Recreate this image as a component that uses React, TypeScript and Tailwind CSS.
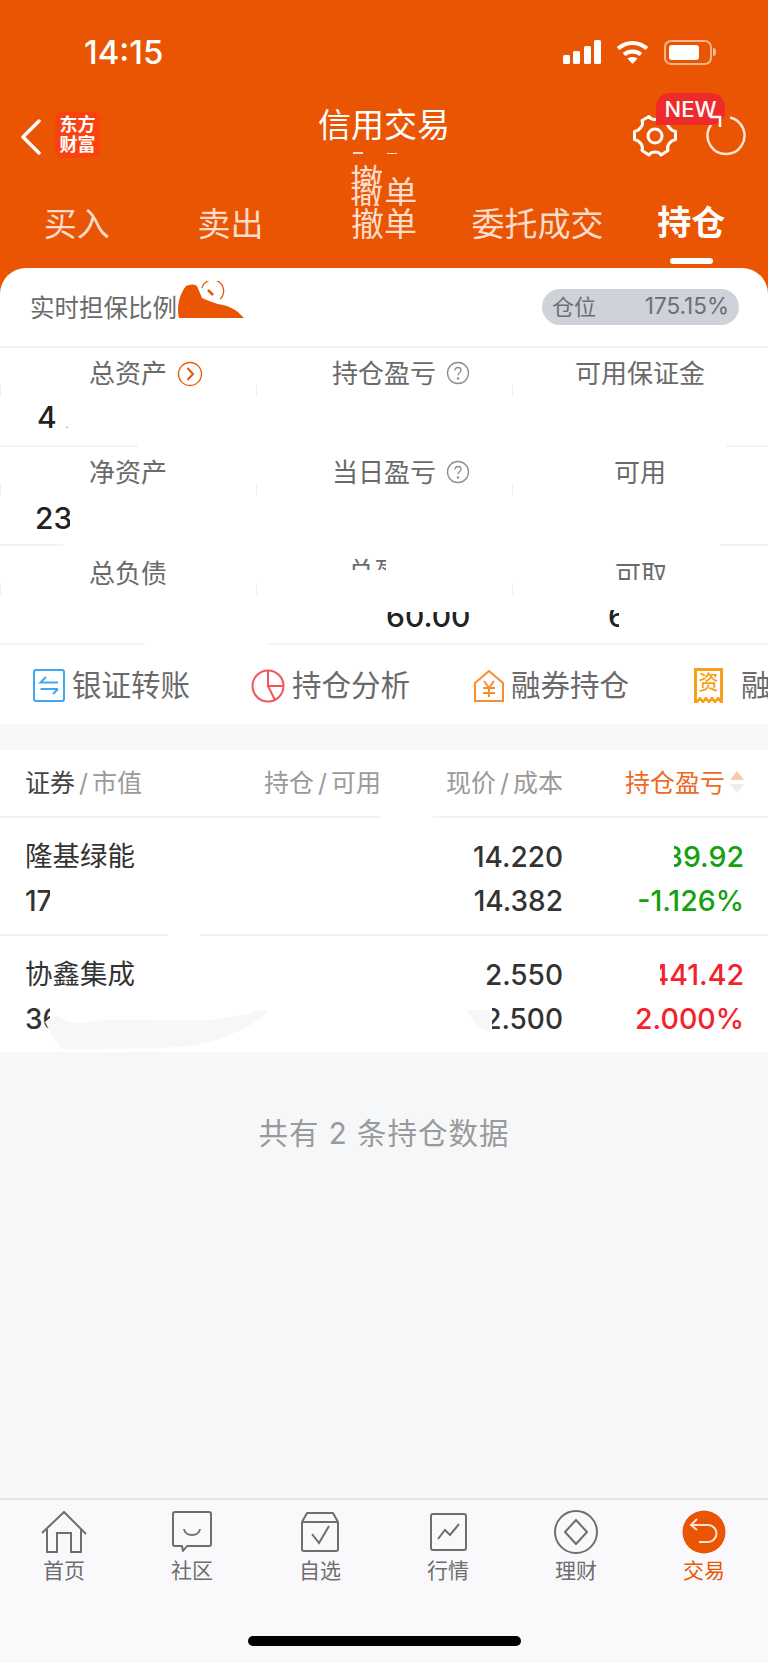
import React from "react";

const Line = ({ left, right, gap }: { left?: number; right?: number; gap?: number }) => {
    // dividers are partly wiped in the picture, so keep only the visible ends
    if (!left && !right) return <div className="h-[2px] bg-[#F3F3F4]"></div>;
    return (
        <div className="h-[2px] flex">
            <div className="bg-[#F3F3F4]" style={{ width: left }}></div>
            {gap ? <div style={{ width: gap }}></div> : <div className="flex-1"></div>}
            {gap ? <div className="flex-1 bg-[#F3F3F4]"></div> : <div className="bg-[#F3F3F4]" style={{ width: right }}></div>}
        </div>
    );
};

const Help = () => (
    <svg className="absolute left-[10px] top-[-13px]" width="24" height="24" viewBox="0 0 24 24" fill="none" stroke="#8E8E8E" strokeWidth="1.3">
        <circle cx="12" cy="12" r="10.5" />
        <path d="M9 9.5c0-2 1.4-3 3-3s3 1 3 2.8c0 2.4-3 2.4-3 5" />
        <circle cx="12" cy="17.5" r="0.6" fill="#8E8E8E" />
    </svg>
);

const Label = ({ text, children }: { text: string; children?: React.ReactNode }) => (
    <div className="h-[52px] flex items-center justify-center">
        <div className="relative leading-none text-[26px] text-[#6A6A6A]">{text}</div>
        {children && <div className="relative w-0 h-0">{children}</div>}
    </div>
);

const Cell = ({ children }: { children: React.ReactNode }) => (
    <div className="relative h-[97px]">
        <div className="absolute left-0 top-[37px] h-[12px] w-[1px] bg-[#F0F0F0]"></div>
        {children}
    </div>
);

const Tool = ({ icon, text, className }: { icon: React.ReactNode; text: string; className: string }) => (
    <div className={`flex items-center shrink-0 ${className}`}>
        {icon}
        <span className="text-[29.5px] leading-none text-[#6A6A6A] whitespace-nowrap">{text}</span>
    </div>
);

const NavItem = ({ icon, text, active }: { icon: React.ReactNode; text: string; active?: boolean }) => (
    <div className="flex flex-col items-center">
        <div className="h-[44px] flex items-center justify-center">{icon}</div>
        <span className={active ? "mt-[3px] text-[21px] leading-[28px] text-[#EA5504]" : "mt-[3px] text-[21px] leading-[28px] text-[#6E6E6E]"}>{text}</span>
    </div>
);

const Clip = ({ width, text, className }: { width: number; text: string; className: string }) => (
    <div className="flex justify-end overflow-hidden ml-auto" style={{ width }}>
        <span className={`shrink-0 whitespace-nowrap ${className}`}>{text}</span>
    </div>
);

const Row = ({ name, sub, price, cost, profit, profitWidth, pct, color, costWidth }: {
    name: string; sub: string; price: string; cost: string; profit: string; profitWidth: number; pct: string; color: string; costWidth: number;
}) => (
    <div className="relative h-[116px] flex bg-white">
        <div className="w-[25px]"></div>
        <div className="w-[200px] pt-[18px] flex flex-col">
            <div className="h-[42px] flex items-center text-[27.5px] leading-none text-[#333]">{name}</div>
            <div className="h-[42px] mt-[2px] w-[25px] overflow-hidden flex items-center text-[28px] leading-none font-medium text-[#333] whitespace-nowrap">{sub}</div>
        </div>
        <div className="w-[338px] pt-[18px] flex flex-col items-end">
            <div className="h-[42px] flex items-center text-[28px] leading-none font-medium text-[#333]">{price}</div>
            <div className="h-[42px] mt-[2px] flex items-center">
                <Clip width={costWidth} text={cost} className="text-[28px] leading-none font-medium text-[#333]" />
            </div>
        </div>
        <div className="w-[181px] pt-[18px] flex flex-col">
            <div className="h-[42px] flex items-center">
                <Clip width={profitWidth} text={profit} className={`text-[28.5px] leading-none font-medium ${color}`} />
            </div>
            <div className={`h-[42px] mt-[2px] flex items-center justify-end text-[28.5px] leading-none font-medium ${color}`}>{pct}</div>
        </div>
    </div>
);

export default function App() {
    return (
        <div className="min-h-[1663px] flex flex-col bg-[#F6F7F9] font-['Inter','Noto_Sans_CJK_SC',sans-serif] overflow-hidden">
            {/* orange header */}
            <div className="h-[268px] bg-[#EA5504] flex flex-col text-white">
                {/* status bar */}
                <div className="h-[100px] pt-[34px] pl-[84px] pr-[52px] flex justify-between">
                    <span className="text-[33px] leading-[36px] font-medium">14:15</span>
                    <div className="flex items-center gap-[15px] h-[36px]">
                        <svg width="38" height="24" viewBox="0 0 38 24" fill="white">
                            <rect x="0" y="15" width="7" height="9" rx="1.5" />
                            <rect x="10" y="11" width="7" height="13" rx="1.5" />
                            <rect x="21" y="6" width="7" height="18" rx="1.5" />
                            <rect x="31" y="0" width="7" height="24" rx="1.5" />
                        </svg>
                        <svg width="33" height="24" viewBox="0 0 33 24" fill="none" stroke="white" strokeWidth="4">
                            <path d="M2 8.5c8.500-7.500 20.500-7.500 29 0" />
                            <path d="M8 14.500c5-4 12-4 17 0" />
                            <path d="M16.500 24l-5-5.500c3-2 7-2 10 0z" fill="white" stroke="none" />
                        </svg>
                        <div className="flex items-center">
                            <div className="w-[48px] h-[25px] rounded-[7px] border-2 border-[#F6B48E] p-[3px]">
                                <div className="w-[30px] h-full rounded-[3px] bg-white"></div>
                            </div>
                            <div className="w-[3px] h-[8px] ml-[1px] rounded-r-full bg-[#F6B48E]"></div>
                        </div>
                    </div>
                </div>
                {/* title row */}
                <div className="relative h-[58px] flex items-center justify-center">
                    <span className="text-[33px] leading-none -mt-[7px]">信用交易</span>
                    <svg className="absolute left-[20px] top-[19px]" width="22" height="36" viewBox="0 0 22 36" fill="none" stroke="white" strokeWidth="3.500" strokeLinecap="round" strokeLinejoin="round">
                        <path d="M19 2L3 18l16 16" />
                    </svg>
                    <div className="absolute left-[55px] top-[12px] w-[45px] h-[46px] rounded-[7px] bg-[#F9420F] flex flex-col items-center justify-center font-['Liberation_Serif','Noto_Sans_CJK_SC',serif] text-[18px] leading-[20px] font-bold">
                        <span>东方</span>
                        <span>财富</span>
                    </div>
                    <svg className="absolute left-[632px] top-[13px]" width="46" height="46" viewBox="0 0 46 46" fill="none" stroke="white" strokeWidth="3">
                        <path d="M17 3.500c2 4 10 4 12 0l7 4c-2 4 2 10 7.500 11v8c-5.500 1-9.500 7-7.500 11l-7 4.500c-2-4-10-4-12 0l-7-4.500c2-4-2-10-7.500-11v-8C8 17.500 12 11.500 10 7.500z" strokeLinejoin="round" />
                        <circle cx="23" cy="23" r="7" />
                    </svg>
                    <svg className="absolute left-[706px] top-[14px]" width="42" height="42" viewBox="0 0 42 42" fill="none" stroke="#FBE3D6" strokeWidth="2.500">
                        <path d="M16 3.500a18.500 18.500 0 1 0 8 0" />
                    </svg>
                    <div className="absolute left-[656px] top-[-7px] w-[69px] h-[32px] rounded-t-[14px] rounded-br-[14px] bg-[#EE2A2A] flex items-center justify-center text-[22px] leading-none font-medium">NEW</div>
                    <svg className="absolute left-[708px] top-[15px]" width="16" height="14" viewBox="0 0 16 14" fill="none" stroke="white" strokeWidth="2.500">
                        <path d="M2 2h10v10" />
                    </svg>
                </div>
                {/* tabs */}
                <div className="grid grid-cols-5 h-[110px]">
                    <div className="flex justify-center pt-[46px] text-[33px] leading-[40px] text-[#FBDCCB]">买入</div>
                    <div className="flex justify-center pt-[46px] text-[33px] leading-[40px] text-[#FBDCCB]">卖出</div>
                    <div className="relative flex justify-center pt-[46px] text-[33px] leading-[40px] text-[#FBDCCB]">
                        撤单
                        {/* smeared copies above the tab */}
                        <div className="absolute left-[43px] top-[6px] w-[32px] h-[20px] overflow-hidden">
                            <span className="block leading-[40px] -mt-[3px]">撤</span>
                        </div>
                        <div className="absolute left-[43px] top-[24px] w-[32px] h-[24px] overflow-hidden">
                            <span className="block leading-[40px] -mt-[6px]">撤</span>
                        </div>
                        <div className="absolute left-[77px] top-[18px] w-[32px] h-[30px] overflow-hidden">
                            <span className="block leading-[40px] -mt-[3px]">单</span>
                        </div>
                        <div className="absolute left-[46px] top-[-6px] w-[10px] h-[2px] bg-[#FBDCCB]"></div>
                        <div className="absolute left-[80px] top-[-5px] w-[10px] h-[1px] bg-[#FBDCCB]"></div>
                    </div>
                    <div className="flex justify-center pt-[46px] text-[33px] leading-[40px] text-[#FBDCCB] whitespace-nowrap">委托成交</div>
                    <div className="flex flex-col items-center pt-[45px]">
                        <span className="text-[34px] leading-[40px] font-bold">持仓</span>
                        <div className="w-[43px] h-[6px] rounded-full bg-white mt-[15px]"></div>
                    </div>
                </div>
            </div>

            {/* collateral bar */}
            <div className="bg-[#EA5504]">
                <div className="relative h-[78px] rounded-t-[26px] bg-white flex items-center justify-between pl-[30px] pr-[29px] pb-[2px]">
                    <span className="text-[24.500px] leading-none text-[#6A6A6A] mt-[5px]">实时担保比例</span>
                    <svg className="absolute left-[176px] top-[13px]" width="70" height="40" viewBox="0 0 70 40" fill="#EA5504">
                        <path d="M3 37C0 26 4 12 10 5c4-2 8-2 11 0l5 12c7 3 14 6 21 7 5 1 11 4 15 7l6 6z" />
                        <path d="M26 7A11 11 0 1 1 44 18" fill="none" stroke="#EA5504" strokeWidth="1.300" />
                        <path d="M32 9l5 5" stroke="#EA5504" strokeWidth="2.500" fill="none" />
                    </svg>
                    <div className="w-[197px] h-[36px] rounded-full bg-[#CFD2D8] flex items-center justify-between px-[10px] text-[#6B6F76] mt-[1px]">
                        <span className="text-[22px] leading-none">仓位</span>
                        <span className="text-[22.500px] leading-none">175.15%</span>
                    </div>
                </div>
            </div>

            {/* assets grid */}
            <div className="bg-white">
                <Line />
                <div className="grid grid-cols-3">
                    <Cell>
                        <Label text="总资产">
                            <svg className="absolute left-[10px] top-[-13px]" width="26" height="26" viewBox="0 0 26 26" fill="none" stroke="#EA5504" strokeWidth="1.300">
                                <circle cx="13" cy="13" r="11.500" />
                                <path d="M10.500 7l5.500 6-5.500 6" strokeWidth="2" />
                            </svg>
                        </Label>
                        <div className="pl-[37px] pt-[2px] text-[30px] leading-none font-medium text-[#222]">4<span className="ml-[9px] text-[8px] text-[#777]">.</span></div>
                    </Cell>
                    <Cell>
                        <Label text="持仓盈亏"><Help /></Label>
                    </Cell>
                    <Cell><Label text="可用保证金" /></Cell>
                </div>
                <Line left={138} right={42} />
                <div className="grid grid-cols-3">
                    <Cell>
                        <Label text="净资产" />
                        <div className="pl-[35px] pt-[4px] h-[38px] w-[70px] overflow-hidden text-[30px] leading-none font-medium text-[#222]">23</div>
                    </Cell>
                    <Cell>
                        <Label text="当日盈亏"><Help /></Label>
                    </Cell>
                    <Cell><Label text="可用" /></Cell>
                </div>
                <Line left={63} right={48} />
                <div className="grid grid-cols-3">
                    <Cell>
                        <div className="pt-[2px]"><Label text="总负债" /></div>
                    </Cell>
                    <Cell>
                        <div className="pl-[92px] pt-[13px] h-[24px] w-[130px] overflow-hidden text-[26px] leading-none text-[#6A6A6A] whitespace-nowrap">总盈亏</div>
                        <div className="ml-[130px] mt-[42px] w-[88px] h-[15px] overflow-hidden flex items-end">
                            <span className="text-[30px] leading-none font-medium text-[#222] -mb-[4px]">60.00</span>
                        </div>
                    </Cell>
                    <Cell>
                        <div className="pl-[103px] pt-[16px] h-[34px] w-[160px] overflow-hidden text-[26px] leading-none text-[#6A6A6A] whitespace-nowrap">可取</div>
                        <div className="ml-[96px] mt-[30px] w-[11px] h-[17px] overflow-hidden flex items-end">
                            <span className="text-[30px] leading-none font-medium text-[#222] -mb-[4px]">6</span>
                        </div>
                    </Cell>
                </div>
                <Line left={145} gap={123} />
            </div>

            {/* quick tools */}
            <div className="h-[79px] pt-[2px] bg-white flex items-center overflow-hidden">
                <Tool
                    className="ml-[33px] gap-[7px]"
                    text="银证转账"
                    icon={
                        <svg width="32" height="33" viewBox="0 0 32 33" fill="none" stroke="#3DA9F5" strokeWidth="2">
                            <rect x="1" y="1" width="30" height="31" rx="2" />
                            <path d="M13 8l-5.500 5.500H25M25 20H7.500M25 20l-5 5" />
                        </svg>
                    }
                />
                <Tool
                    className="ml-[61px] gap-[7px]"
                    text="持仓分析"
                    icon={
                        <svg width="34" height="34" viewBox="0 0 34 34" fill="none" stroke="#F4545A" strokeWidth="2">
                            <circle cx="17" cy="17" r="15.500" />
                            <path d="M17 2v15h15M17 17l7 14" />
                        </svg>
                    }
                />
                <Tool
                    className="ml-[64px] gap-[7px]"
                    text="融券持仓"
                    icon={
                        <svg width="30" height="32" viewBox="0 0 30 32" fill="none" stroke="#FA8C2E" strokeWidth="2">
                            <path d="M1 13L15 1l14 12v18H1z" />
                            <path d="M10 11l5 7 5-7M9 18h12M9 23h12M15 18v9" />
                        </svg>
                    }
                />
                <Tool
                    className="ml-[65px] gap-[18px]"
                    text="融券"
                    icon={
                        <div className="relative w-[29px] h-[35px] border-[3px] border-b-0 border-[#F7A11B] flex items-start justify-center">
                            <span className="text-[20px] leading-[24px] text-[#F7A11B] font-medium">资</span>
                            <svg className="absolute left-[-3px] bottom-0" width="29" height="6" viewBox="0 0 29 6" fill="none" stroke="#F7A11B" strokeWidth="2.500">
                                <path d="M0 1l3 4 3-4 3 4 3-4 3 4 3-4 3 4 3-4 3 4" />
                            </svg>
                        </div>
                    }
                />
            </div>

            {/* positions table */}
            <div className="mt-[26px] bg-white">
                <div className="h-[66px] flex items-center text-[25px] leading-none text-[#9A9A9A]">
                    <div className="w-[225px] pl-[25px] whitespace-nowrap">
                        <span className="text-[#444]">证券</span>
                        <span className="mx-[4px]">/</span>市值
                    </div>
                    <div className="w-[156px] text-right whitespace-nowrap">持仓<span className="mx-[4px]">/</span>可用</div>
                    <div className="w-[182px] text-right whitespace-nowrap">现价<span className="mx-[4px]">/</span>成本</div>
                    <div className="relative ml-[62px] text-[#EE6A1F] whitespace-nowrap">
                        持仓盈亏
                        <svg className="absolute left-[104px] top-[-2px]" width="16" height="26" viewBox="0 0 16 26">
                            <path d="M8 2l7 9H1z" fill="#F9C9AE" />
                            <path d="M8 24l7-9H1z" fill="#EEEEEE" />
                        </svg>
                    </div>
                </div>
                <Line left={381} gap={52} />
                <Row name="隆基绿能" sub="17" price="14.220" cost="14.382" profit="-39.92" profitWidth={70} pct="-1.126%" color="text-[#13A10E]" costWidth={90} />
                <Line left={168} gap={32} />
                <div className="relative">
                    <Row name="协鑫集成" sub="36" price="2.550" cost="2.500" profit="441.42" profitWidth={84} pct="2.000%" color="text-[#F5222D]" costWidth={71} />
                    {/* wiped area at the bottom of the row */}
                    <svg className="absolute left-[45px] top-[74px]" width="260" height="44" viewBox="0 0 260 44" fill="#F6F7F9">
                        <path d="M0 12c8-8 14-6 20-2 10 4 20 3 40 0 30-2 60 2 105 0 15-2 30-4 38-6 6-4 12-4 20-5-4 10-20 18-38 26-16 6-30 10-50 12-40 2-90 2-118 2C14 36 6 24 0 12z" />
                    </svg>
                    <svg className="absolute left-[466px] top-[74px]" width="24" height="24" viewBox="0 0 24 24" fill="#F6F7F9">
                        <path d="M0 0h24v22C14 20 6 10 0 0z" />
                    </svg>
                </div>
            </div>

            <div className="flex-1 pt-[63px] flex justify-center">
                <span className="text-[29.500px] leading-[36px] text-[#9A9A9A] tracking-[1px]">共有 2 条持仓数据</span>
            </div>

            {/* bottom nav */}
            <div className="h-[165px] bg-[#F9F9FB] border-t-2 border-[#E4E4E6] relative">
                <div className="grid grid-cols-6 pt-[10px]">
                    <NavItem text="首页" icon={
                        <svg width="46" height="42" viewBox="0 0 46 42" fill="none" stroke="#6E6E6E" strokeWidth="2">
                            <path d="M1 22L23 1l22 22M6 18v23h10V22h14v19h10V18" />
                        </svg>
                    } />
                    <NavItem text="社区" icon={
                        <svg width="40" height="42" viewBox="0 0 40 42" fill="none" stroke="#6E6E6E" strokeWidth="2">
                            <path d="M3 1h34a2 2 0 0 1 2 2v30a2 2 0 0 1-2 2H15l-4 5-1-5H3a2 2 0 0 1-2-2V3a2 2 0 0 1 2-2z" strokeLinejoin="round" />
                            <path d="M12 18c1 8 15 8 16 0" />
                        </svg>
                    } />
                    <NavItem text="自选" icon={
                        <svg width="38" height="40" viewBox="0 0 38 40" fill="none" stroke="#6E6E6E" strokeWidth="2">
                            <path d="M1 10L6 1h26l5 9M1 10v27a2 2 0 0 0 2 2h32a2 2 0 0 0 2-2V10z" strokeLinejoin="round" />
                            <path d="M11 22l7 9 10-17" />
                        </svg>
                    } />
                    <NavItem text="行情" icon={
                        <svg width="37" height="38" viewBox="0 0 37 38" fill="none" stroke="#6E6E6E" strokeWidth="2">
                            <rect x="1" y="1" width="35" height="36" rx="2" />
                            <path d="M8 26l7-9 5 5 9-11" />
                        </svg>
                    } />
                    <NavItem text="理财" icon={
                        <svg width="44" height="44" viewBox="0 0 44 44" fill="none" stroke="#6E6E6E" strokeWidth="2">
                            <circle cx="22" cy="22" r="21" />
                            <path d="M22 10l11 12-11 12-11-12z" strokeLinejoin="round" />
                        </svg>
                    } />
                    <NavItem active text="交易" icon={
                        <svg width="44" height="44" viewBox="0 0 44 44" fill="none">
                            <circle cx="22" cy="22" r="21.500" fill="#EA5504" />
                            <path d="M15 9l-6 6 6 5M9 15h17a8.500 8.500 0 0 1 0 17H17" stroke="#FBE3D6" strokeWidth="2" />
                        </svg>
                    } />
                </div>
                <div className="absolute left-[248px] top-[136px] w-[273px] h-[10px] rounded-full bg-black"></div>
            </div>
        </div>
    );
}
